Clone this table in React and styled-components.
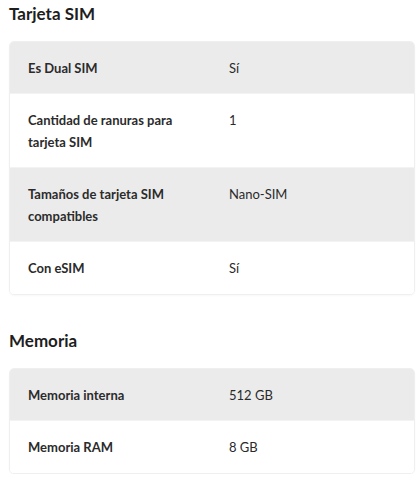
import React from "react";
import styled, { createGlobalStyle } from "styled-components";

const Global = createGlobalStyle`
  html, body { margin: 0; padding: 0; background: #fff; }
  body { font-family: "Lato", "Open Sans", sans-serif; color: #222; }
`;

const Page = styled.div`
  padding: 0 3px 0 9px;
`;

const Section = styled.section`
  & + & { margin-top: 32px; }
`;

const Heading = styled.h2`
  margin: 0 0 13px;
  font-size: 17px;
  line-height: 28px;
  font-weight: 700;
  color: #1e1e1e;
`;

const Card = styled.div`
  border: 1px solid #efefef;
  border-radius: 5px;
  overflow: hidden;
  box-shadow: 0 1px 2px rgba(0, 0, 0, 0.03);
`;

const Row = styled.div`
  display: grid;
  grid-template-columns: 184px 1fr;
  column-gap: 17px;
  padding: 15px 18px;
  font-size: 13px;
  line-height: 22px;
  background: ${(p) => (p.$shaded ? "#ebebeb" : "#fff")};
  box-shadow: inset 0 -1px 0 #f3f3f3;
  &:last-child { box-shadow: none; }
`;

const Label = styled.div`
  font-weight: 700;
  color: #2b2b2b;
`;

const Value = styled.div`
  font-weight: 400;
  color: #2a2a2a;
`;

const sections = [
  {
    title: "Tarjeta SIM",
    rows: [
      ["Es Dual SIM", "Sí"],
      ["Cantidad de ranuras para tarjeta SIM", "1"],
      ["Tamaños de tarjeta SIM compatibles", "Nano-SIM"],
      ["Con eSIM", "Sí"],
    ],
  },
  {
    title: "Memoria",
    rows: [
      ["Memoria interna", "512 GB"],
      ["Memoria RAM", "8 GB"],
    ],
  },
];

export default function App() {
  return (
    <Page>
      <Global />
      {sections.map((s) => (
        <Section key={s.title}>
          <Heading>{s.title}</Heading>
          <Card>
            {s.rows.map(([k, v], i) => (
              <Row key={k} $shaded={i % 2 === 0}>
                <Label>{k}</Label>
                <Value>{v}</Value>
              </Row>
            ))}
          </Card>
        </Section>
      ))}
    </Page>
  );
}
